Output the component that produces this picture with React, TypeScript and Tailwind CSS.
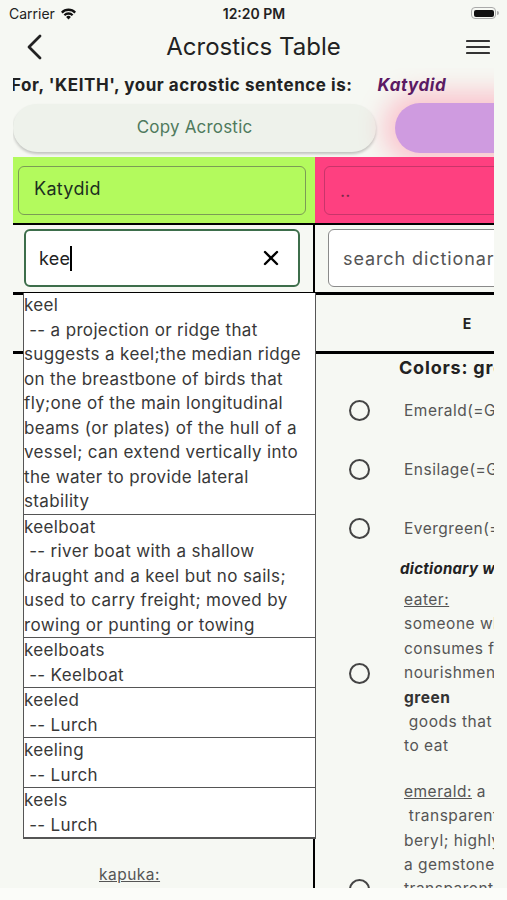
import { X } from 'lucide-react';

type Suggestion = { word: string; lines: string[] };

const suggestions: Suggestion[] = [
  {
    word: 'keel',
    lines: [
      ' -- a projection or ridge that',
      'suggests a keel;the median ridge',
      'on the breastbone of birds that',
      'fly;one of the main longitudinal',
      'beams (or plates) of the hull of a',
      'vessel; can extend vertically into',
      'the water to provide lateral',
      'stability',
    ],
  },
  {
    word: 'keelboat',
    lines: [
      ' -- river boat with a shallow',
      'draught and a keel but no sails;',
      'used to carry freight; moved by',
      'rowing or punting or towing',
    ],
  },
  { word: 'keelboats', lines: [' -- Keelboat'] },
  { word: 'keeled', lines: [' -- Lurch'] },
  { word: 'keeling', lines: [' -- Lurch'] },
  { word: 'keels', lines: [' -- Lurch'] },
];

function Wifi() {
  return (
    <svg width="17" height="13" viewBox="0 0 17 13" fill="#111">
      <path d="M8.5 12.6 6.1 10a3.4 3.4 0 0 1 4.8 0z" />
      <path d="M3.6 7.4a6.9 6.9 0 0 1 9.8 0l-1.6 1.7a4.6 4.6 0 0 0-6.6 0z" />
      <path d="M1 4.7a10.6 10.6 0 0 1 15 0l-1.6 1.7a8.3 8.3 0 0 0-11.8 0z" />
    </svg>
  );
}

function Battery() {
  return (
    <div className="flex items-center">
      <div className="w-[25px] h-[12px] rounded-[4px] border border-[#aaa] p-[1.5px]">
        <div className="w-full h-full rounded-[2px] bg-[#111]" />
      </div>
      <div className="w-[2px] h-[4px] rounded-r-sm bg-[#aaa] ml-[1px]" />
    </div>
  );
}

function Radio() {
  return <span className="block shrink-0 w-[21px] h-[21px] rounded-full border-2 border-[#444]" />;
}

export default function App() {
  return (
    <div className="w-[507px] h-[900px] overflow-hidden bg-[#f6f8f3] text-[#222] font-[Inter,sans-serif] flex flex-col">
      {/* status bar */}
      <div className="h-[26px] shrink-0 grid grid-cols-[1fr_auto_1fr] items-center pl-[9px] pr-[8px] text-[14px]">
        <div className="flex items-center gap-[5px]">
          <span>Carrier</span>
          <Wifi />
        </div>
        <div className="font-semibold">12:20 PM</div>
        <div className="flex justify-end">
          <Battery />
        </div>
      </div>

      {/* nav bar */}
      <div className="h-[42px] shrink-0 grid grid-cols-[70px_1fr_70px] items-center">
        <svg width="18" height="28" viewBox="0 0 18 28" className="ml-[26px]">
          <polyline points="14,3 3,14 14,25" fill="none" stroke="#222" strokeWidth="2.8" strokeLinecap="round" strokeLinejoin="round" />
        </svg>
        <h1 className="text-center text-[24px] text-[#222]">Acrostics Table</h1>
        <svg width="24" height="16" viewBox="0 0 24 16" className="justify-self-end mr-[17px]">
          <g stroke="#333" strokeWidth="2.2" strokeLinecap="round">
            <line x1="1" y1="2" x2="23" y2="2" />
            <line x1="1" y1="8" x2="23" y2="8" />
            <line x1="1" y1="14" x2="23" y2="14" />
          </g>
        </svg>
      </div>

      <main className="flex-1 min-h-0 mx-[13px] overflow-hidden flex flex-col">
        {/* sentence */}
        <div className="h-[36px] shrink-0 flex items-center whitespace-nowrap -ml-[2px] text-[17px] tracking-[0.55px] font-bold">
          <span className="text-[#222]">For, 'KEITH', your acrostic sentence is:</span>
          <span className="ml-[25px] italic text-[#5b1a63] relative z-10">Katydid</span>
        </div>

        {/* buttons */}
        <div className="h-[48px] shrink-0 flex items-center">
          <button className="w-[363px] h-[48px] shrink-0 rounded-full bg-[#eef2eb] shadow-[0_2px_3px_rgba(0,0,0,0.22)] text-[17px] tracking-[0.2px] text-[#4f7a5d]">
            Copy Acrostic
          </button>
          <div className="ml-[19px] w-[200px] h-[50px] shrink-0 rounded-full bg-[#cf9be0] shadow-[0_0_24px_12px_rgba(255,140,165,0.45)]" />
        </div>

        {/* colored row */}
        <div className="mt-[5px] h-[68px] shrink-0 flex border-b-2 border-black">
          <div className="w-[302px] shrink-0 bg-[#b3fa5d] pl-[5px] pr-[9px] pt-[9px]">
            <div className="h-[49px] rounded-[6px] border-[1.5px] border-[#7c9c55] flex items-center pl-[15px] pb-[5px] text-[18px] tracking-[0.3px] text-[#1d3020]">
              Katydid
            </div>
          </div>
          <div className="w-[304px] shrink-0 bg-[#fe4080] pl-[9px] pt-[9px]">
            <div className="h-[49px] rounded-[6px] border-[1.5px] border-[#c8356a] flex items-center pl-[15px] text-[18px] text-[#7a2a48]">
              ..
            </div>
          </div>
        </div>

        {/* search row */}
        <div className="h-[67px] shrink-0 flex">
          <div className="w-[302px] shrink-0 border-r-2 border-black pl-[11px] pt-[4px]">
            <div className="w-[276px] h-[58px] rounded-[6px] border-2 border-[#3d6e4b] bg-white flex items-center pl-[13px] pr-[15px]">
              <span className="text-[18px] tracking-[0.3px] text-[#222]">kee</span>
              <span className="w-[2px] h-[25px] bg-black" />
              <X size={24} strokeWidth={2.4} className="ml-auto text-black" />
            </div>
          </div>
          <div className="w-[304px] shrink-0 pl-[13px] pt-[4px]">
            <div className="h-[58px] rounded-[6px] border-[1.5px] border-[#8a8a8a] bg-white flex items-center pl-[14px] text-[18px] tracking-[0.9px] text-[#555] whitespace-nowrap">
              search dictionary
            </div>
          </div>
        </div>

        {/* table */}
        <div className="relative flex-1 min-h-0">
          <div className="w-[608px] border-t-[3px] border-black">
            <div className="h-[59px] flex border-b-[3px] border-black text-[14px] font-bold">
              <div className="w-[302px] shrink-0 border-r-2 border-black flex items-center justify-center">K</div>
              <div className="w-[304px] shrink-0 flex items-center justify-center">E</div>
            </div>
            <div className="flex">
              {/* left column (mostly under the suggestions list) */}
              <div className="w-[302px] shrink-0 border-r-2 border-black h-[600px]">
                <div className="h-[27px] flex items-center justify-center text-[18px] font-bold">Colors: khaki</div>
                {['Kelly(=Green)', 'Khaki(=Brown)', 'Kiwi(=Green)'].map(t => (
                  <div key={t} className="h-[59px] flex items-center pl-[34px] gap-[34px] text-[15px] text-[#555]">
                    <Radio />
                    <span>{t}</span>
                  </div>
                ))}
                <div className="h-[22px] pl-[85px] text-[14.5px] font-bold italic">dictionary words</div>
                <div className="h-[283px]" />
                <div className="pl-[86px] text-[15.5px] tracking-[0.5px] leading-[24.4px] text-[#555]">
                  <span className="underline">kapuka:</span>
                </div>
              </div>

              {/* right column */}
              <div className="w-[304px] shrink-0 whitespace-nowrap">
                <div className="h-[27px] flex items-center pl-[84px] text-[18px] tracking-[0.8px] font-bold">Colors: green</div>
                {['Emerald(=Green)', 'Ensilage(=Green)', 'Evergreen(=Green)'].map(t => (
                  <div key={t} className="h-[59px] flex items-center pl-[34px] gap-[34px] text-[15.5px] tracking-[0.5px] text-[#555]">
                    <Radio />
                    <span>{t}</span>
                  </div>
                ))}
                <div className="h-[22px] flex items-center pl-[85px] text-[15px] tracking-[0.3px] font-bold italic">dictionary words</div>
                <div className="mt-[8px] flex items-center pl-[34px] gap-[34px]">
                  <Radio />
                  <div className="text-[15.5px] tracking-[0.5px] leading-[24.4px] text-[#555]">
                    <div className="underline">eater:</div>
                    <div>someone who</div>
                    <div>consumes food for</div>
                    <div>nourishment</div>
                    <div className="font-bold text-[#333]">green</div>
                    <div className="whitespace-pre"> goods that are fit</div>
                    <div>to eat</div>
                  </div>
                </div>
                <div className="mt-[21px] flex items-center pl-[34px] gap-[34px]">
                  <Radio />
                  <div className="text-[15.5px] tracking-[0.5px] leading-[24.4px] text-[#555]">
                    <div><span className="underline">emerald:</span> a</div>
                    <div className="whitespace-pre"> transparent green</div>
                    <div>beryl; highly valued</div>
                    <div>a gemstone</div>
                    <div>transparent green</div>
                    <div>colored beryl</div>
                    <div>of the color of</div>
                    <div>emerald</div>
                    <div>grass</div>
                  </div>
                </div>
              </div>
            </div>
          </div>

          {/* suggestions dropdown */}
          <div className="absolute left-[10px] top-[1px] w-[293px] bg-white border-x-[1.5px] border-b-2 border-[#555] text-[17px] tracking-[0.35px] leading-[24.5px] text-[#383838]">
            {suggestions.map((s, i) => (
              <div key={s.word} className={i === 0 ? '' : 'border-t-[1.5px] border-[#555]'}>
                <div>{s.word}</div>
                {s.lines.map(l => (
                  <div key={l} className="whitespace-pre">{l}</div>
                ))}
              </div>
            ))}
          </div>
        </div>
      </main>

      <div className="h-[12px] shrink-0 bg-[#fbfcf9]" />
    </div>
  );
}
